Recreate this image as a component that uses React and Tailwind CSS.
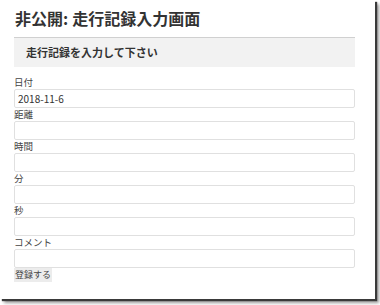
import React from "react";

const fields = [
  { label: "日付", value: "2018-11-6" },
  { label: "距離", value: "" },
  { label: "時間", value: "" },
  { label: "分", value: "" },
  { label: "秒", value: "" },
  { label: "コメント", value: "" },
];

export default function App() {
  return (
    <div className="w-[380px] h-[305px] bg-white overflow-hidden">
      {/* screenshot frame with drop shadow */}
      <div
        className="w-[375px] h-[299px] bg-white shadow-[2px_2px_1px_#3a3a3a,4px_4px_3px_#9a9a9a] pl-[14px] pt-[6px] text-[#333]"
        style={{ fontFamily: '"Noto Sans CJK JP", "Noto Sans", sans-serif' }}
      >
        <h1 className="text-[16px] font-bold leading-[24px] pl-[1px] flex">
          <span>非公開:</span>
          <span className="ml-[4px]">走行記録入力画面</span>
        </h1>
        <div className="mt-[7px] w-[341px] h-[30px] bg-[#f2f2f2] border-t border-[#d0d0d0] flex items-center pl-[12px]">
          <h2 className="text-[11px] font-bold leading-none">走行記録を入力して下さい</h2>
        </div>
        <form className="mt-[9px] w-[341px]">
          {fields.map((f) => (
            <div key={f.label}>
              <label className="block text-[9.5px] leading-[13px] text-[#444]">{f.label}</label>
              <input
                type="text"
                defaultValue={f.value}
                className="block w-full h-[19px] border border-[#e0e0e0] rounded-[2px] px-[3px] text-[10px] text-[#333] outline-none"
              />
            </div>
          ))}
          <button
            type="button"
            className="block h-[14px] px-[1px] bg-[#ececec] text-[9px] leading-[14px] text-[#444]"
          >
            登録する
          </button>
        </form>
      </div>
    </div>
  );
}
